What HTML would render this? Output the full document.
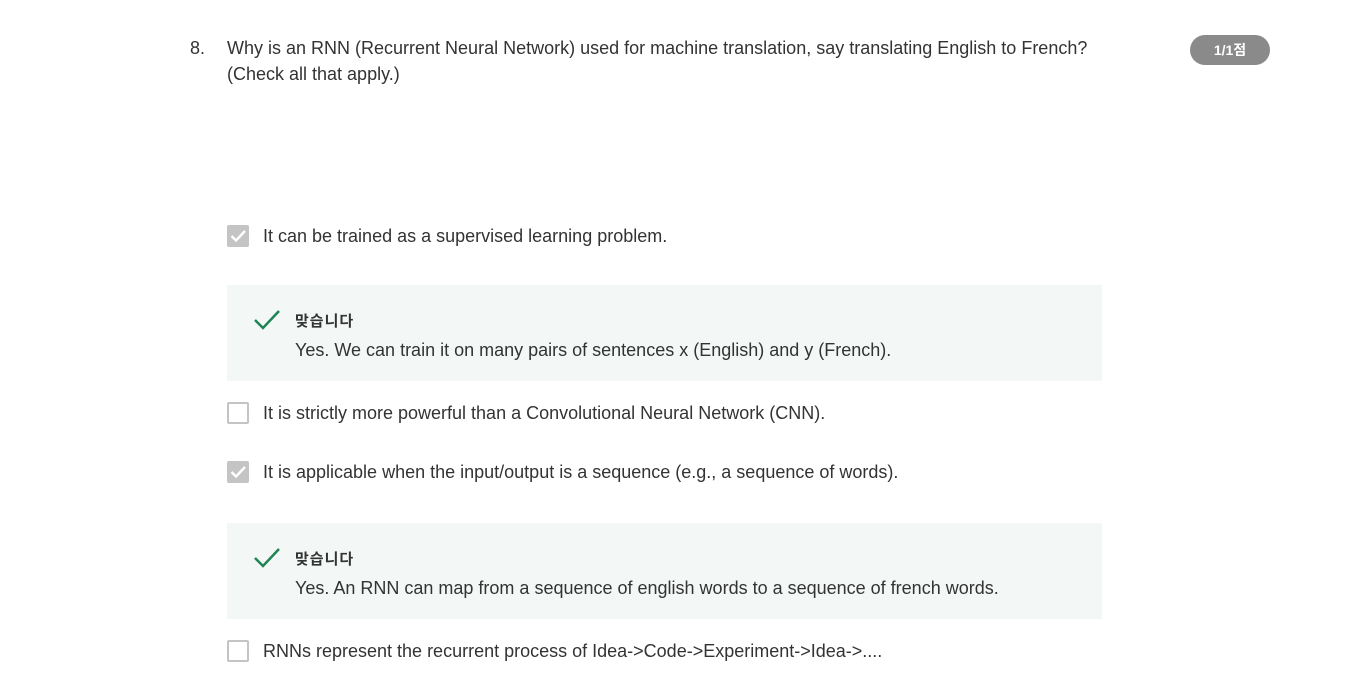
<!DOCTYPE html>
<html><head><meta charset="utf-8"><style>
body{margin:0;width:1370px;height:696px;background:#fff;font-family:"Liberation Sans","Noto Sans CJK KR",sans-serif;color:#333;position:relative;overflow:hidden}
.a{position:absolute;white-space:nowrap;font-size:18px;line-height:26px}
.cb{position:absolute;left:227px;width:18px;height:18px;border:2px solid #c4c4c4;border-radius:2px;background:#fff}
.cb.on{background:#c4c4c4}
.cb.on svg{position:absolute;left:0px;top:0px}
.fb{position:absolute;left:227px;width:875px;height:96px;background:#f3f8f6}
.ok{position:absolute;left:68px;font-size:15px;font-weight:bold;color:#333;letter-spacing:1px}
.ex{position:absolute;left:68px;font-size:18px;color:#333;white-space:nowrap}
</style></head><body>
<div class="a" style="left:190px;top:35px">8.</div>
<div class="a" style="left:227px;top:35px">Why is an RNN (Recurrent Neural Network) used for machine translation, say translating English to French?<br>(Check all that apply.)</div>
<div style="position:absolute;left:1190px;top:35px;width:80px;height:30px;border-radius:15px;background:#8a8a8a;color:#fff;font-weight:bold;font-size:14px;line-height:30px;text-align:center">1/1점</div>

<div class="cb on" style="top:225px"><svg width="18" height="18" viewBox="0 0 18 18"><path d="M2.5 9l4.5 4.5L16 4" stroke="#fff" stroke-width="2.4" fill="none"/></svg></div>
<div class="a" style="left:263px;top:223px">It can be trained as a supervised learning problem.</div>
<div class="fb" style="top:285px">
<svg style="position:absolute;left:26px;top:24px" width="28" height="22" viewBox="0 0 28 22"><path d="M2 11l8 8L26 2" stroke="#1f8354" stroke-width="2.5" fill="none"/></svg>
<div class="ok" style="top:25px">맞습니다</div>
<div class="ex" style="top:55px">Yes. We can train it on many pairs of sentences x (English) and y (French).</div>
</div>

<div class="cb" style="top:402px"></div>
<div class="a" style="left:263px;top:400px">It is strictly more powerful than a Convolutional Neural Network (CNN).</div>

<div class="cb on" style="top:461px"><svg width="18" height="18" viewBox="0 0 18 18"><path d="M2.5 9l4.5 4.5L16 4" stroke="#fff" stroke-width="2.4" fill="none"/></svg></div>
<div class="a" style="left:263px;top:459px">It is applicable when the input/output is a sequence (e.g., a sequence of words).</div>
<div class="fb" style="top:523px">
<svg style="position:absolute;left:26px;top:24px" width="28" height="22" viewBox="0 0 28 22"><path d="M2 11l8 8L26 2" stroke="#1f8354" stroke-width="2.5" fill="none"/></svg>
<div class="ok" style="top:25px">맞습니다</div>
<div class="ex" style="top:55px">Yes. An RNN can map from a sequence of english words to a sequence of french words.</div>
</div>

<div class="cb" style="top:640px"></div>
<div class="a" style="left:263px;top:638px">RNNs represent the recurrent process of Idea-&gt;Code-&gt;Experiment-&gt;Idea-&gt;....</div>
</body></html>
